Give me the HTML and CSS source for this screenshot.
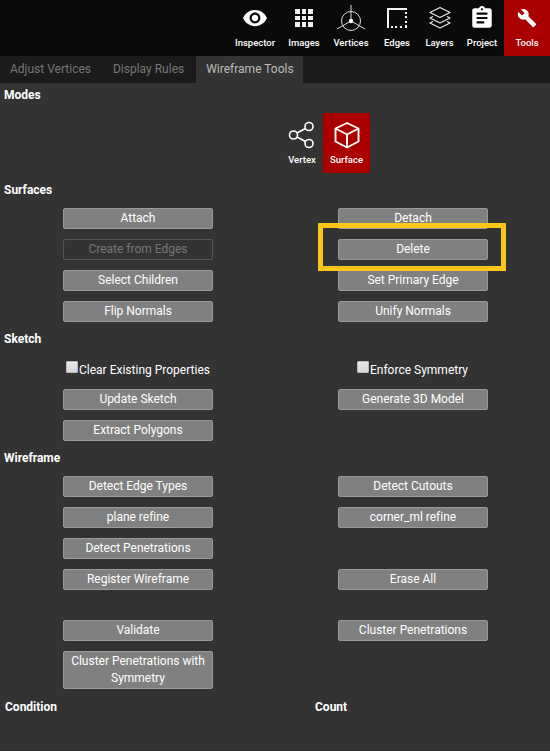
FILE: index.html
```html
<!DOCTYPE html>
<html lang="en">
<head>
<meta charset="utf-8">
<title>Wireframe Tools</title>
<link rel="stylesheet" href="styles.css">
</head>
<body>
<nav class="toolbar">
  <a class="tool"><svg width="26" height="26" viewBox="0 0 24 24"><path fill="#fff" d="M12 4.500C7 4.500 2.730 7.610 1 12c1.730 4.390 6 7.500 11 7.500s9.270-3.110 11-7.500c-1.730-4.390-6-7.500-11-7.500zM12 17c-2.760 0-5-2.240-5-5s2.240-5 5-5 5 2.240 5 5-2.240 5-5 5zm0-8c-1.660 0-3 1.340-3 3s1.340 3 3 3 3-1.340 3-3-1.340-3-3-3z"/></svg><span>Inspector</span></a>
  <a class="tool"><svg width="28" height="28" viewBox="0 0 28 28"><path fill="#f4f4f4" d="M5 5h5v5H5zM12 5h4v5h-4zM18 5h5v5h-5zM5 12h5v4H5zM12 12h4v4h-4zM18 12h5v4h-5zM5 18h5v5H5zM12 18h4v5h-4zM18 18h5v5h-5z"/></svg><span>Images</span></a>
  <a class="tool"><svg width="28" height="28" viewBox="0 0 28 28"><g fill="none" stroke="#ddd"><circle cx="14" cy="17" r="9.500"/><path d="M14 1v16L0 25M14 17l14 8"/></g><circle cx="14" cy="17" r="2.200" fill="#fff"/></svg><span>Vertices</span></a>
  <a class="tool edges"><svg width="28" height="28" viewBox="0 0 28 28"><path fill="#f4f4f4" d="M4 4h20v2H6v18H4zM22 8h2v2h-2zM22 12h2v2h-2zM22 17h2v2h-2zM22 21h2v3h-2zM8 22h2v2H8zM12 22h2v2h-2zM17 22h2v2h-2z"/></svg><span>Edges</span></a>
  <a class="tool"><svg width="28" height="28" viewBox="0 0 28 28"><path fill="none" stroke="#eee" stroke-width="1.100" stroke-linejoin="round" d="M14 3.500L24 8.500 14 13.500 4 8.500zM7 12.500L4 14l10 5 10-5-3-1.500M7 17.500L4 19l10 5 10-5-3-1.500"/></svg><span>Layers</span></a>
  <a class="tool"><svg width="26" height="26" viewBox="0 0 24 24"><path fill="#fff" d="M19 3h-4.180C14.400 1.840 13.300 1 12 1s-2.400.84-2.820 2H5c-1.100 0-2 .9-2 2v14c0 1.100.9 2 2 2h14c1.100 0 2-.9 2-2V5c0-1.100-.9-2-2-2zm-7 0c.55 0 1 .45 1 1s-.45 1-1 1-1-.45-1-1 .45-1 1-1zm2 14H7v-2h7v2zm3-4H7v-2h10v2zm0-4H7V7h10v2z"/></svg><span>Project</span></a>
  <a class="tool active"><svg width="20" height="20" viewBox="0 0 24 24"><path fill="#fff" d="M22.700 19l-9.100-9.100c.9-2.300.4-5-1.500-6.900-2-2-5-2.400-7.400-1.300L9 6 6 9 1.600 4.700C.4 7.100.9 10.100 2.900 12.100c1.900 1.900 4.600 2.400 6.900 1.500l9.100 9.100c.4.4 1 .4 1.400 0l2.300-2.300c.5-.4.5-1.100.1-1.400z"/></svg><span>Tools</span></a>
</nav>
<div class="tabs">
  <a class="tab">Adjust Vertices</a>
  <a class="tab">Display Rules</a>
  <a class="tab selected">Wireframe Tools</a>
</div>
<main class="panel">
  <h2>Modes</h2>
  <div class="modes">
    <a class="mode vertex"><svg width="30" height="32" viewBox="0 0 30 32"><g fill="none" stroke="#fff" stroke-width="1.600"><circle cx="6.500" cy="17" r="4"/><circle cx="22" cy="8.500" r="4"/><circle cx="22" cy="25.500" r="4"/><path d="M10 15l8.500-4.500M10 19l8.500 4.500"/></g></svg><span>Vertex</span></a>
    <a class="mode surface"><svg width="30" height="32" viewBox="0 0 30 32"><path fill="none" stroke="#fff" stroke-width="1.900" stroke-linejoin="round" d="M15 5L26.500 10.500v13L15 29.500 3.500 23.500v-13zM3.500 10.500L15 16.500l11.500-6M15 16.500v13"/></svg><span>Surface</span></a>
  </div>
  <h2>Surfaces</h2>
  <div class="grid">
    <button>Attach</button><button>Detach</button>
    <button disabled>Create from Edges</button><div class="highlighted"><button>Delete</button></div>
    <button>Select Children</button><button>Set Primary Edge</button>
    <button>Flip Normals</button><button>Unify Normals</button>
  </div>
  <h2 class="sketch">Sketch</h2>
  <div class="checks">
    <label><input type="checkbox"><span>Clear Existing Properties</span></label>
    <label><input type="checkbox"><span>Enforce Symmetry</span></label>
  </div>
  <div class="grid sketch-actions">
    <button>Update Sketch</button><button>Generate 3D Model</button>
    <button>Extract Polygons</button>
  </div>
  <h2 class="wireframe">Wireframe</h2>
  <div class="grid">
    <button>Detect Edge Types</button><button>Detect Cutouts</button>
    <button>plane refine</button><button>corner_ml refine</button>
    <button class="first">Detect Penetrations</button>
    <button class="first">Register Wireframe</button><button>Erase All</button>
  </div>
  <div class="grid validation">
    <button>Validate</button><button>Cluster Penetrations</button>
    <button>Cluster Penetrations with Symmetry</button>
  </div>
  <div class="summary"><span>Condition</span><span>Count</span></div>
</main>
</body>
</html>
```
FILE: styles.css
```css
* { box-sizing: border-box; }
body {
  margin: 0;
  height: 751px;
  overflow: hidden;
  display: flex;
  flex-direction: column;
  background: #333;
  color: #fff;
  font: 12px/17px Roboto, sans-serif;
}
.toolbar {
  height: 56px;
  flex: none;
  padding-left: 230px;
  display: grid;
  grid-template-columns: 50px 48px 46px 45px 41px 44px 46px;
  background: #0a0a0a;
}
.tool {
  display: grid;
  grid-template-rows: 36px 12px;
  align-content: start;
  justify-items: center;
  align-items: center;
  font-size: 9.5px;
  line-height: 12px;
  font-weight: 500;
}
.tool span { margin-top: 1px; }
.tool svg { display: block; }
.edges { padding-left: 1px; }
.active { background: #a00; }
.tabs {
  height: 27px;
  flex: none;
  display: flex;
  gap: 2px;
  background: #1b1b1b;
}
.tab { padding: 5px 10px 0; color: #777; }
.tab.selected { width: 107px; white-space: nowrap; background: #333; color: #bbb; }
.panel { flex: 1; border-bottom: 1px solid #292929; }
h2 { margin: 0; padding: 4px 4px 0; height: 24px; font-size: 12px; line-height: 17px; font-weight: 700; }
.modes { display: flex; height: 71px; padding: 6px 0 5px 281px; }
.mode {
  width: 47px;
  display: flex;
  flex-direction: column;
  align-items: center;
  gap: 4px;
  padding-top: 5px;
  font-size: 9.5px;
  line-height: 12px;
  font-weight: 500;
}
.vertex { width: 42px; }
.surface { background: #a00; }
.grid {
  display: grid;
  grid-template-columns: 150px 150px;
  column-gap: 125px;
  row-gap: 10px;
  padding: 6px 0 0 63px;
}
button {
  width: 150px;
  min-height: 21px;
  margin: 0;
  padding: 1px 4px;
  border: 1px solid #999;
  border-radius: 2px;
  background: #808080;
  color: #fff;
  font: inherit;
  letter-spacing: -0.01px;
}
button:disabled { background: #333; border-color: #555; color: #777; }
.first { grid-column: 1; }
.highlighted { position: relative; height: 21px; }
.highlighted::after {
  content: "";
  position: absolute;
  inset: -16px -18px -11px -20px;
  border: 5px solid #ffc61a;
}
.sketch { margin-top: 5px; }
.checks { display: grid; grid-template-columns: 291px 1fr; height: 32px; padding: 10px 0 0 66px; }
.checks label { display: flex; align-items: flex-start; line-height: 17px; }
.checks span { padding-top: 1px; }
input {
  appearance: none;
  width: 12px;
  height: 12px;
  margin: 0 1px 0 0;
  border: 1px solid #bbb;
  border-radius: 1px;
  background: linear-gradient(#e8e8e8, #d8d8d8);
}
.sketch-actions { padding-top: 6px; }
.wireframe { margin-top: 5px; }
.validation { padding-top: 30px; }
.summary { display: grid; grid-template-columns: 310px 1fr; padding: 10px 5px 0; font-weight: 700; }
```
